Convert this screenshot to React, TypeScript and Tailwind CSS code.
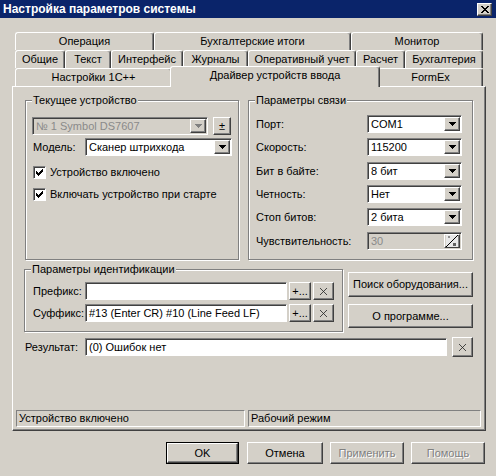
import React from "react";

const raised =
  "border border-t-white border-l-white border-r-[#404040] border-b-[#404040] shadow-[inset_-1px_-1px_0_#808080] bg-[#d4d0c8]";
const sunken =
  "border border-t-[#808080] border-l-[#808080] border-r-white border-b-white shadow-[inset_1px_1px_0_#404040]";
const thinSunken =
  "border border-t-[#808080] border-l-[#808080] border-r-white border-b-white";

function Arrow({ disabled }: { disabled?: boolean }) {
  return (
    <svg width="7" height="4" viewBox="0 0 7 4" shapeRendering="crispEdges">
      <path
        d="M0 0H7V1H6V2H5V3H4V4H3V3H2V2H1V1H0Z"
        fill={disabled ? "#808080" : "#000"}
      />
    </svg>
  );
}

function Combo({
  value,
  className,
  disabled,
}: {
  value: string;
  className: string;
  disabled?: boolean;
}) {
  return (
    <div
      className={`${sunken} ${disabled ? "bg-[#d4d0c8]" : "bg-white"} p-[1px] flex h-[18px] ${className}`}
    >
      <span
        className={`flex-1 pl-[2px] leading-[14px] whitespace-nowrap overflow-hidden ${disabled ? "text-[#8a8a8a]" : "text-black"}`}
      >
        {value}
      </span>
      <div className={`${raised} w-[16px] h-full flex items-center justify-center`}>
        <Arrow disabled={disabled} />
      </div>
    </div>
  );
}

function CheckMark() {
  const cols = [2, 3, 4, 3, 2, 1, 0];
  return (
    <svg width="7" height="7" viewBox="0 0 7 7" shapeRendering="crispEdges">
      {cols.map((y, x) => (
        <rect key={x} x={x} y={y} width="1" height="3" fill="#000" />
      ))}
    </svg>
  );
}

function Check({ label }: { label: string }) {
  return (
    <div className="flex items-center h-[13px] pl-[1px]">
      <div
        className={`${sunken} w-[13px] h-[13px] bg-white flex items-center justify-center`}
      >
        <CheckMark />
      </div>
      <span className="ml-[4px] leading-[13px]">{label}</span>
    </div>
  );
}

function Group({
  label,
  className,
  children,
}: {
  label: string;
  className: string;
  children?: React.ReactNode;
}) {
  return (
    <div
      className={`relative border border-[#808080] shadow-[inset_1px_1px_0_#fff,1px_1px_0_#fff] ${className}`}
    >
      <span className="absolute -top-[8px] left-[6px] bg-[#d4d0c8] px-[1px] leading-[14px] whitespace-nowrap">
        {label}
      </span>
      {children}
    </div>
  );
}

function Btn({
  children,
  className,
  disabled,
}: {
  children: React.ReactNode;
  className: string;
  disabled?: boolean;
}) {
  return (
    <div
      className={`${raised} flex items-center justify-center whitespace-nowrap ${disabled ? "text-[#808080] [text-shadow:1px_1px_0_#fff]" : "text-black"} ${className}`}
    >
      {children}
    </div>
  );
}

function Tab({
  label,
  className,
}: {
  label: string;
  className: string;
}) {
  return (
    <div
      className={`h-[18px] flex items-center justify-center border-t border-l border-r border-t-white border-l-white border-r-[#404040] rounded-t-[3px] shadow-[inset_-1px_0_0_#808080] whitespace-nowrap ${className}`}
    >
      {label}
    </div>
  );
}

function XIcon() {
  return (
    <svg width="9" height="9" viewBox="0 0 9 9">
      <path d="M1 1L8 8M8 1L1 8" stroke="#222" strokeWidth="0.8" />
    </svg>
  );
}

function SliderIcon() {
  return (
    <svg width="12" height="12" viewBox="0 0 12 12" shapeRendering="crispEdges">
      <rect x="0" y="0" width="12" height="12" fill="#e8e8e8" />
      {[0, 2, 4, 6, 8].map((i) => (
        <rect key={"a" + i} x={i + 1} y={11 - i - 1} width="1" height="1" fill="#808080" />
      ))}
      {[0, 1, 2, 3, 4, 5, 6, 7, 8, 9, 10, 11].map((i) => (
        <rect key={i} x={i} y={11 - i} width="1" height="1" fill="#000" />
      ))}
      <rect x="7" y="8" width="3" height="3" fill="#606060" />
      <rect x="2" y="1" width="2" height="2" fill="#909090" />
    </svg>
  );
}

export default function App() {
  return (
    <div className="w-[496px] h-[476px] bg-[#d4d0c8] text-[11px] text-black font-['Liberation_Sans',Arial,sans-serif] overflow-hidden">
      {/* Title bar */}
      <div className="h-[18px] bg-[#0a246a] flex items-center">
        <span className="pl-[3px] text-white font-bold text-[12px] leading-[18px]">
          Настройка параметров системы
        </span>
        <div className={`${raised} ml-auto mr-[4px] w-[15px] h-[13px] flex items-center justify-center`}>
          <svg width="8" height="7" viewBox="0 0 8 7" shapeRendering="crispEdges">
            <path d="M0 0h2v1h1v1h2v-1h1v-1h2v1h-1v1h-1v1h-1v1h1v1h1v1h1v1h-2v-1h-1v-1h-2v1h-1v1h-2v-1h1v-1h1v-1h1v-1h-1v-1h-1v-1h-1z" fill="#000" />
          </svg>
        </div>
      </div>

      {/* Tabs */}
      <div className="mt-[14px] pl-[15px] flex flex-col">
        <div className="flex h-[18px]">
          <Tab label="Операция" className="w-[139px]" />
          <Tab label="Бухгалтерские итоги" className="w-[197px]" />
          <Tab label="Монитор" className="w-[132px]" />
        </div>
        <div className="flex h-[18px]">
          <Tab label="Общие" className="w-[50px]" />
          <Tab label="Текст" className="w-[46px]" />
          <Tab label="Интерфейс" className="w-[72px]" />
          <Tab label="Журналы" className="w-[65px]" />
          <Tab label="Оперативный учет" className="w-[108px]" />
          <Tab label="Расчет" className="w-[49px]" />
          <Tab label="Бухгалтерия" className="w-[78px]" />
        </div>
        <div className="flex h-[18px] items-start">
          <Tab label="Настройки 1С++" className="w-[157px]" />
          <div className="relative z-10 -mt-[2px] -mx-[2px] w-[210px] h-[21px] pb-[4px] bg-[#d4d0c8] flex items-center justify-center border-t border-l border-r border-t-white border-l-white border-r-[#404040] rounded-t-[3px] shadow-[inset_-1px_0_0_#808080]">
            Драйвер устройств ввода
          </div>
          <Tab label="FormEx" className="w-[105px]" />
        </div>
      </div>

      {/* Panel */}
      <div className="ml-[12px] w-[474px] h-[345px] border border-t-white border-l-white border-r-[#404040] border-b-[#404040] shadow-[inset_-1px_-1px_0_#808080] flex flex-col">
        <div className="flex mt-[13px] ml-[12px]">
          <Group label="Текущее устройство" className="w-[214px] h-[160px]">
            <div className="flex flex-col pt-[16px] pl-[6px]">
              <div className="flex">
                <Combo value="№ 1 Symbol DS7607" className="w-[176px]" disabled />
                <Btn className="ml-[5px] w-[18px] h-[18px]">±</Btn>
              </div>
              <div className="flex items-center mt-[3px]">
                <span className="w-[53px] pl-[1px]">Модель:</span>
                <Combo value="Сканер штрихкода" className="w-[147px]" />
              </div>
              <div className="mt-[10px]">
                <Check label="Устройство включено" />
              </div>
              <div className="mt-[9px]">
                <Check label="Включать устройство при старте" />
              </div>
            </div>
          </Group>
          <Group label="Параметры связи" className="ml-[9px] w-[225px] h-[160px]">
            <div className="flex flex-col pt-[14px] pl-[7px]">
              <div className="flex items-center">
                <span className="w-[111px]">Порт:</span>
                <Combo value="COM1" className="w-[95px]" />
              </div>
              <div className="flex items-center mt-[5px]">
                <span className="w-[111px]">Скорость:</span>
                <Combo value="115200" className="w-[95px]" />
              </div>
              <div className="flex items-center mt-[6px]">
                <span className="w-[111px]">Бит в байте:</span>
                <Combo value="8 бит" className="w-[95px]" />
              </div>
              <div className="flex items-center mt-[5px]">
                <span className="w-[111px]">Четность:</span>
                <Combo value="Нет" className="w-[95px]" />
              </div>
              <div className="flex items-center mt-[5px]">
                <span className="w-[111px]">Стоп битов:</span>
                <Combo value="2 бита" className="w-[95px]" />
              </div>
              <div className="flex items-center mt-[6px]">
                <span className="w-[111px]">Чувствительность:</span>
                <div className={`${sunken} bg-[#d4d0c8] p-[1px] flex h-[18px] w-[95px]`}>
                  <span className="flex-1 pl-[2px] leading-[14px] text-[#8a8a8a]">30</span>
                  <div className={`${raised} w-[16px] h-full flex items-center justify-center`}>
                    <SliderIcon />
                  </div>
                </div>
              </div>
            </div>
          </Group>
        </div>

        <div className="flex mt-[9px] ml-[11px]">
          <Group label="Параметры идентификации" className="w-[319px] h-[63px]">
            <div className="flex flex-col pt-[12px] pl-[8px]">
              <div className="flex items-center">
                <span className="w-[52px]">Префикс:</span>
                <div className={`${sunken} bg-white w-[202px] h-[18px]`} />
                <Btn className="ml-[2px] w-[22px] h-[18px]">+...</Btn>
                <Btn className="ml-[2px] w-[21px] h-[18px]">
                  <XIcon />
                </Btn>
              </div>
              <div className="flex items-center mt-[4px]">
                <span className="w-[52px]">Суффикс:</span>
                <div className={`${sunken} bg-white w-[202px] h-[18px] pl-[3px] leading-[16px] whitespace-nowrap`}>
                  #13 (Enter CR) #10 (Line Feed LF)
                </div>
                <Btn className="ml-[2px] w-[22px] h-[18px]">+...</Btn>
                <Btn className="ml-[2px] w-[21px] h-[18px]">
                  <XIcon />
                </Btn>
              </div>
            </div>
          </Group>
          <div className="ml-[5px] mt-[3px] flex flex-col">
            <Btn className="w-[125px] h-[25px]">Поиск оборудования...</Btn>
            <Btn className="mt-[7px] w-[125px] h-[24px]">О программе...</Btn>
          </div>
        </div>

        <div className="flex items-center mt-[5px] ml-[12px]">
          <span className="w-[60px]">Результат:</span>
          <div className={`${sunken} bg-white w-[362px] h-[18px] pl-[3px] leading-[16px]`}>
            (0) Ошибок нет
          </div>
          <Btn className="ml-[5px] w-[21px] h-[20px]">
            <XIcon />
          </Btn>
        </div>

        <div className="mt-auto mb-[3px] ml-[3px] flex">
          <div className={`${thinSunken} w-[229px] h-[17px] pl-[2px] leading-[15px]`}>
            Устройство включено
          </div>
          <div className={`${thinSunken} ml-[3px] w-[233px] h-[17px] pl-[2px] leading-[15px]`}>
            Рабочий режим
          </div>
        </div>
      </div>

      {/* Bottom buttons */}
      <div className="flex mt-[11px] pl-[166px]">
        <div className="w-[73px] h-[22px] border border-black">
          <Btn className="w-full h-full">OK</Btn>
        </div>
        <Btn className="ml-[8px] w-[76px] h-[22px]">Отмена</Btn>
        <Btn className="ml-[7px] w-[74px] h-[22px]" disabled>
          Применить
        </Btn>
        <Btn className="ml-[7px] w-[74px] h-[22px]" disabled>
          Помощь
        </Btn>
      </div>
    </div>
  );
}
